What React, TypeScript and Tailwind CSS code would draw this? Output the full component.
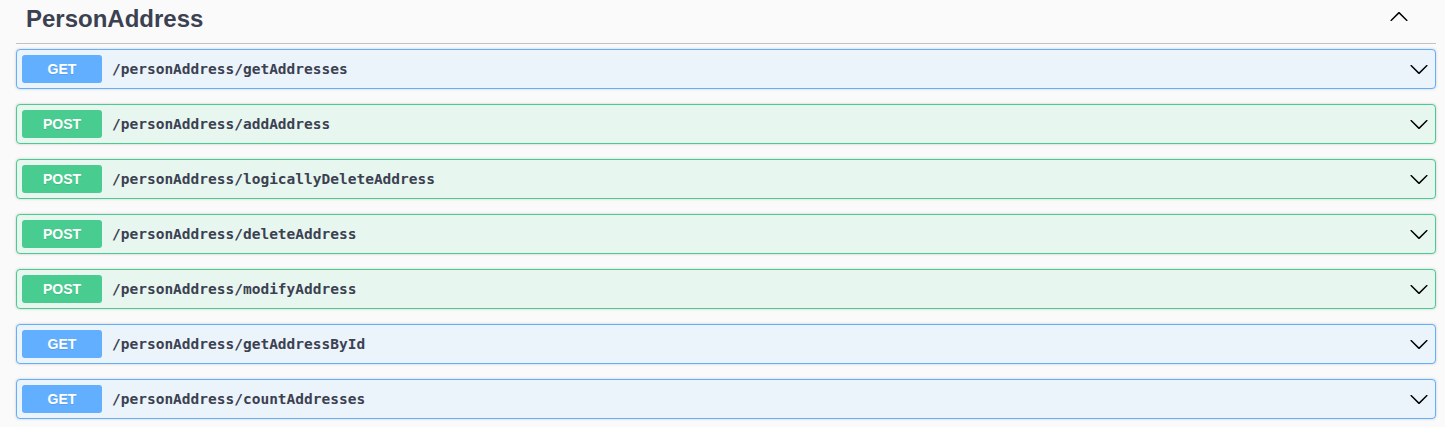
import React from "react";

type Op = { method: "GET" | "POST"; path: string };

const ops: Op[] = [
  { method: "GET", path: "/personAddress/getAddresses" },
  { method: "POST", path: "/personAddress/addAddress" },
  { method: "POST", path: "/personAddress/logicallyDeleteAddress" },
  { method: "POST", path: "/personAddress/deleteAddress" },
  { method: "POST", path: "/personAddress/modifyAddress" },
  { method: "GET", path: "/personAddress/getAddressById" },
  { method: "GET", path: "/personAddress/countAddresses" },
];

const Arrow = ({ up = false }: { up?: boolean }) => (
  <svg width="20" height="20" viewBox="0 0 20 20" className={up ? "rotate-180" : ""}>
    <path
      fill="#000"
      d="M17.418 6.109c.272-.268.709-.268.979 0s.271.701 0 .969l-7.908 7.83c-.27.268-.707.268-.979 0l-7.908-7.83c-.27-.268-.27-.701 0-.969.271-.268.709-.268.979 0L10 13.25l7.418-7.141z"
    />
  </svg>
);

export default function App() {
  return (
    <div className="min-h-[427px] w-[1445px] bg-[#fafafa] pl-4 pr-[9px] font-['Liberation_Sans',Arial,sans-serif]">
      <div className="flex h-[44px] items-start border-b border-[rgba(59,65,81,0.3)]">
        <h3 className="flex-1 pl-[10px] pt-[1px] text-[24px] font-bold text-[#3b4151]">PersonAddress</h3>
        <div className="mr-[27px] mt-[7px]">
          <Arrow up />
        </div>
      </div>
      <div className="mt-[5px] flex flex-col gap-[15px]">
        {ops.map((op) => {
          const get = op.method === "GET";
          return (
            <div
              key={op.path}
              className={
                "flex h-[40px] items-center rounded-[4px] border p-[5px] shadow-[0_0_3px_rgba(0,0,0,0.19)] " +
                (get
                  ? "border-[#61affe] bg-[#ebf3fb]"
                  : "border-[#49cc90] bg-[#e8f6f0]")
              }
            >
              <span
                className={
                  "flex h-[28px] w-[80px] items-center justify-center rounded-[3px] text-[14px] font-bold text-white [text-shadow:0_1px_0_rgba(0,0,0,0.1)] " +
                  (get ? "bg-[#61affe]" : "bg-[#49cc90]")
                }
              >
                {op.method}
              </span>
              <span className="flex-1 px-[10px] pt-[1px] font-['DejaVu_Sans_Mono',monospace] text-[14.5px] font-bold text-[#3b4151]">
                {op.path}
              </span>
              <div className="mr-[1px] flex items-center">
                <Arrow />
              </div>
            </div>
          );
        })}
      </div>
    </div>
  );
}
